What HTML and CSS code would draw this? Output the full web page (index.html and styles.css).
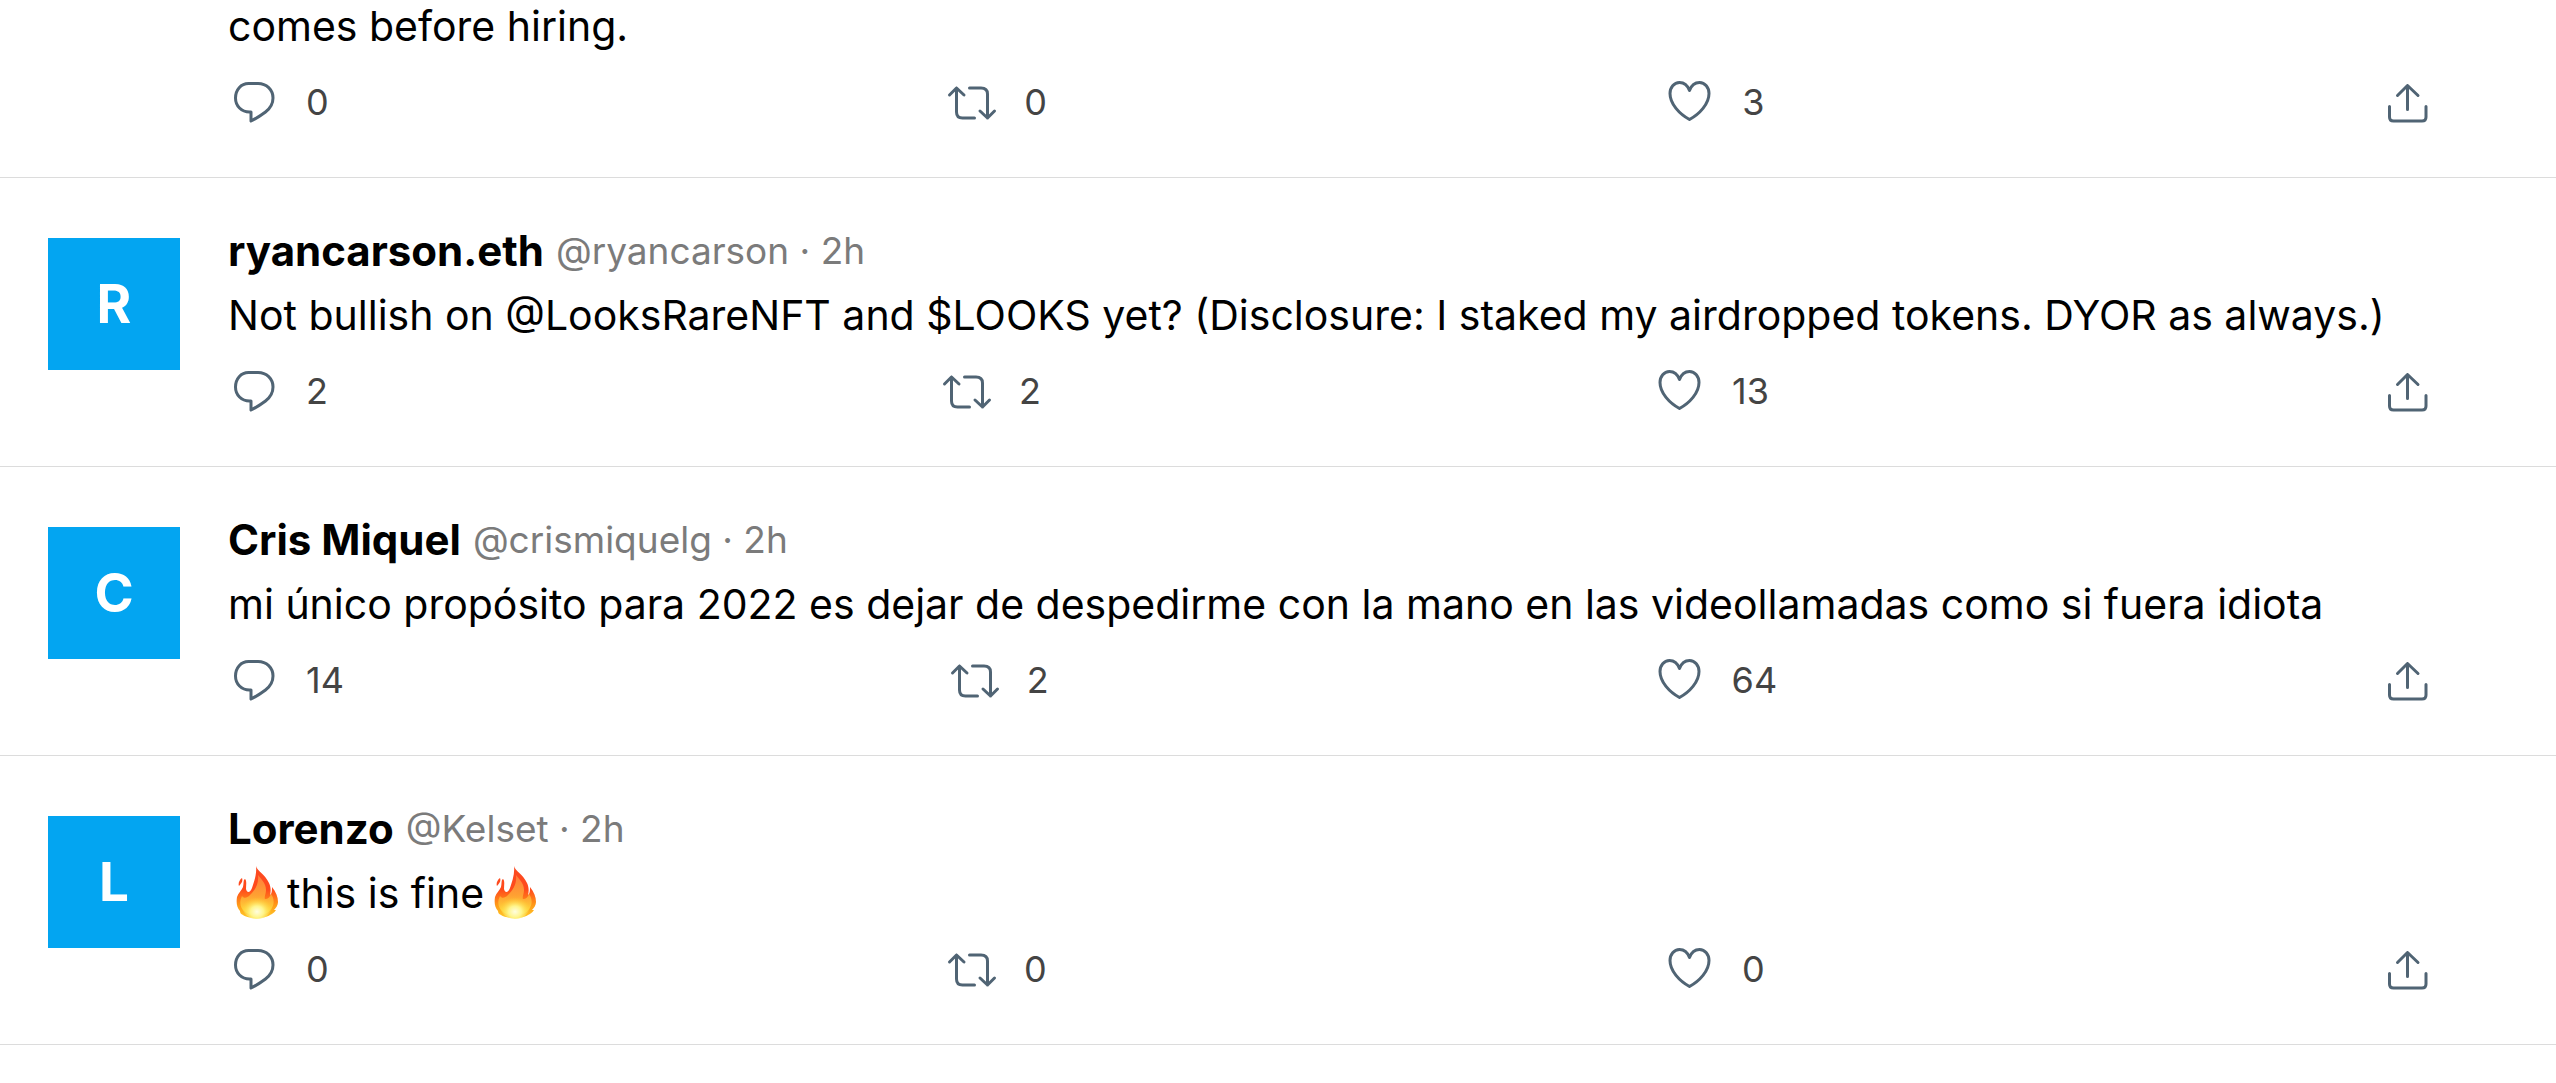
FILE: index.html
```html
<!DOCTYPE html>
<html lang="en">
<head>
<meta charset="utf-8">
<meta name="viewport" content="width=device-width, initial-scale=1">
<title>Timeline</title>
<link rel="stylesheet" href="styles.css">
</head>
<body>
<svg class="sprite" aria-hidden="true">
  <defs>
    <linearGradient id="flame-outer" x1="0" y1="0" x2="0" y2="1">
      <stop offset="0" stop-color="#fb4a22"/>
      <stop offset=".45" stop-color="#ff4a1c"/>
      <stop offset=".75" stop-color="#ff9a18"/>
      <stop offset="1" stop-color="#ffc928"/>
    </linearGradient>
    <linearGradient id="flame-mid" x1="0" y1="0" x2="0" y2="1">
      <stop offset="0" stop-color="#ff7a3c"/>
      <stop offset=".5" stop-color="#ffa032"/>
      <stop offset="1" stop-color="#ffe23c"/>
    </linearGradient>
    <radialGradient id="flame-core" cx=".5" cy=".72" r=".55">
      <stop offset="0" stop-color="#fffde0"/>
      <stop offset=".4" stop-color="#fff58c"/>
      <stop offset="1" stop-color="#ffd52e" stop-opacity="0"/>
    </radialGradient>
  </defs>
  <symbol id="reply" viewBox="0 0 51 51">
    <path d="M20.500 6.500H30C38.500 6.500 45 12.700 45 21C45 26.500 42.300 31.300 37.500 35C33.500 38 28.500 41.300 23 44V35H21.500C13.500 35 7.500 29 7.500 21C7.500 12.700 13 6.500 20.500 6.500Z"/>
  </symbol>
  <symbol id="retweet" viewBox="0 0 51 51">
    <path d="M3.500 18L10.500 11L18 18M10.500 11V35Q10.500 41 16.500 41H28.500M23.500 11H35Q41.500 11 41.500 17V41M34 34L41.500 41L48.500 34"/>
  </symbol>
  <symbol id="like" viewBox="0 0 51 51">
    <path d="M25.500 13.500C23.500 8.200 19.800 5.500 15.500 5.500C10 5.500 6 10.500 6 16.500C6 27 15.500 37 25.500 42.500C35.500 37 45 27 45 16.500C45 10.500 41 5.500 35.500 5.500C31.200 5.500 27.500 8.200 25.500 13.500Z"/>
  </symbol>
  <symbol id="share" viewBox="0 0 51 51">
    <path d="M25.500 32.500V8.500M15.500 18.500L25.500 8.500L36 18.500M7.500 29.500V40Q7.500 44 11.500 44H40Q44 44 44 40V29.500"/>
  </symbol>
  <symbol id="fire" viewBox="0 0 57 54">
    <path fill="url(#flame-outer)" d="M28 0C29 5 37 8 41 17C43 21 43 26 42 29C44 28 44 24 44 21C48 26 50 31 50 36C50 39 48 42 46 44C47 44 47 44 48 44C46 47 44 48 42 49C37 53 20 53 15 49C13 48 12 47 12 45C9 42 8 37 9 31C10 27 14 24 15 21C16 17 15 14 17 13C19 15 18 19 18 23C19 27 22 27 24 22C26 16 29 8 28 0ZM14 12C15 15 14 17 11 20C10 18 11 14 14 12Z"/>
    <path fill="url(#flame-mid)" d="M30 9C33 13 38 17 38 24C38 28 36 31 37 33C40 33 42 31 43 28C47 33 47 42 39 47C34 50 22 50 17 46C12 42 11 36 14 30C16 33 19 32 22 29C27 24 31 18 30 9Z"/>
    <ellipse fill="url(#flame-core)" cx="29" cy="40" rx="15" ry="13"/>
  </symbol>
</svg>

<main class="feed">
  <article class="tweet">
    <div class="avatar-gap"></div>
    <div class="content">
      <p class="text">comes before hiring.</p>
      <div class="actions">
        <button class="action" type="button" aria-label="Reply"><svg class="icon"><use href="#reply"/></svg><span>0</span></button>
        <button class="action" type="button" aria-label="Retweet"><svg class="icon"><use href="#retweet"/></svg><span>0</span></button>
        <button class="action" type="button" aria-label="Like"><svg class="icon"><use href="#like"/></svg><span>3</span></button>
        <button class="action" type="button" aria-label="Share"><svg class="icon"><use href="#share"/></svg></button>
      </div>
    </div>
  </article>

  <article class="tweet">
    <div class="avatar">R</div>
    <div class="content">
      <header class="byline"><strong class="name">ryancarson.eth</strong><span class="meta">@ryancarson · 2h</span></header>
      <p class="text">Not bullish on @LooksRareNFT and $LOOKS yet? (Disclosure: I staked my airdropped tokens. DYOR as always.)</p>
      <div class="actions">
        <button class="action" type="button" aria-label="Reply"><svg class="icon"><use href="#reply"/></svg><span>2</span></button>
        <button class="action" type="button" aria-label="Retweet"><svg class="icon"><use href="#retweet"/></svg><span>2</span></button>
        <button class="action" type="button" aria-label="Like"><svg class="icon"><use href="#like"/></svg><span>13</span></button>
        <button class="action" type="button" aria-label="Share"><svg class="icon"><use href="#share"/></svg></button>
      </div>
    </div>
  </article>

  <article class="tweet">
    <div class="avatar">C</div>
    <div class="content">
      <header class="byline"><strong class="name">Cris Miquel</strong><span class="meta">@crismiquelg · 2h</span></header>
      <p class="text" lang="es">mi único propósito para 2022 es dejar de despedirme con la mano en las videollamadas como si fuera idiota</p>
      <div class="actions">
        <button class="action" type="button" aria-label="Reply"><svg class="icon"><use href="#reply"/></svg><span>14</span></button>
        <button class="action" type="button" aria-label="Retweet"><svg class="icon"><use href="#retweet"/></svg><span>2</span></button>
        <button class="action" type="button" aria-label="Like"><svg class="icon"><use href="#like"/></svg><span>64</span></button>
        <button class="action" type="button" aria-label="Share"><svg class="icon"><use href="#share"/></svg></button>
      </div>
    </div>
  </article>

  <article class="tweet">
    <div class="avatar">L</div>
    <div class="content">
      <header class="byline"><strong class="name">Lorenzo</strong><span class="meta">@Kelset · 2h</span></header>
      <p class="text with-emoji"><svg class="emoji" role="img" aria-label="fire"><use href="#fire"/></svg><span>this is fine</span><svg class="emoji" role="img" aria-label="fire"><use href="#fire"/></svg></p>
      <div class="actions">
        <button class="action" type="button" aria-label="Reply"><svg class="icon"><use href="#reply"/></svg><span>0</span></button>
        <button class="action" type="button" aria-label="Retweet"><svg class="icon"><use href="#retweet"/></svg><span>0</span></button>
        <button class="action" type="button" aria-label="Like"><svg class="icon"><use href="#like"/></svg><span>0</span></button>
        <button class="action" type="button" aria-label="Share"><svg class="icon"><use href="#share"/></svg></button>
      </div>
    </div>
  </article>
</main>
</body>
</html>
```
FILE: styles.css
```css
* {
  box-sizing: border-box;
}

body {
  margin: 0;
  background: #fff;
  color: #000;
  font-family: Inter, "Liberation Sans", sans-serif;
  font-size: 41px;
  line-height: 64px;
}

.sprite {
  position: absolute;
  width: 0;
  height: 0;
}

.feed {
  overflow: hidden;
}

.tweet {
  display: flex;
  gap: 48px;
  padding: 41px 123px 49px 48px;
  border-bottom: 1px solid #dcdcdc;
}

/* The first tweet is scrolled partly out of view. */
.tweet:first-child {
  margin-top: -47px;
}

.avatar,
.avatar-gap {
  flex: none;
  width: 132px;
}

.avatar {
  display: flex;
  align-items: center;
  justify-content: center;
  height: 132px;
  margin-top: 19px;
  background: #03a5f1;
  color: #fff;
  font-size: 53px;
  font-weight: 700;
}

.content {
  flex: 1;
  min-width: 0;
}

.byline {
  display: flex;
  align-items: center;
  gap: 12px;
}

.name {
  font-size: 42px;
  font-weight: 700;
}

.meta {
  color: #7b7b7b;
  font-size: 37px;
}

.text {
  margin: 0;
}

.with-emoji {
  display: flex;
  align-items: center;
  gap: 2px;
}

.emoji {
  width: 57px;
  height: 54px;
}

.actions {
  display: flex;
  justify-content: space-between;
  margin-top: 19px;
}

.action {
  display: flex;
  align-items: center;
  gap: 27px;
  height: 51px;
  padding: 0;
  border: 0;
  background: none;
  color: #444;
  font: inherit;
  font-size: 36px;
  line-height: 51px;
  cursor: pointer;
}

.icon {
  width: 51px;
  height: 51px;
  fill: none;
  stroke: #506474;
  stroke-width: 3;
  stroke-linecap: round;
  stroke-linejoin: round;
}
```
